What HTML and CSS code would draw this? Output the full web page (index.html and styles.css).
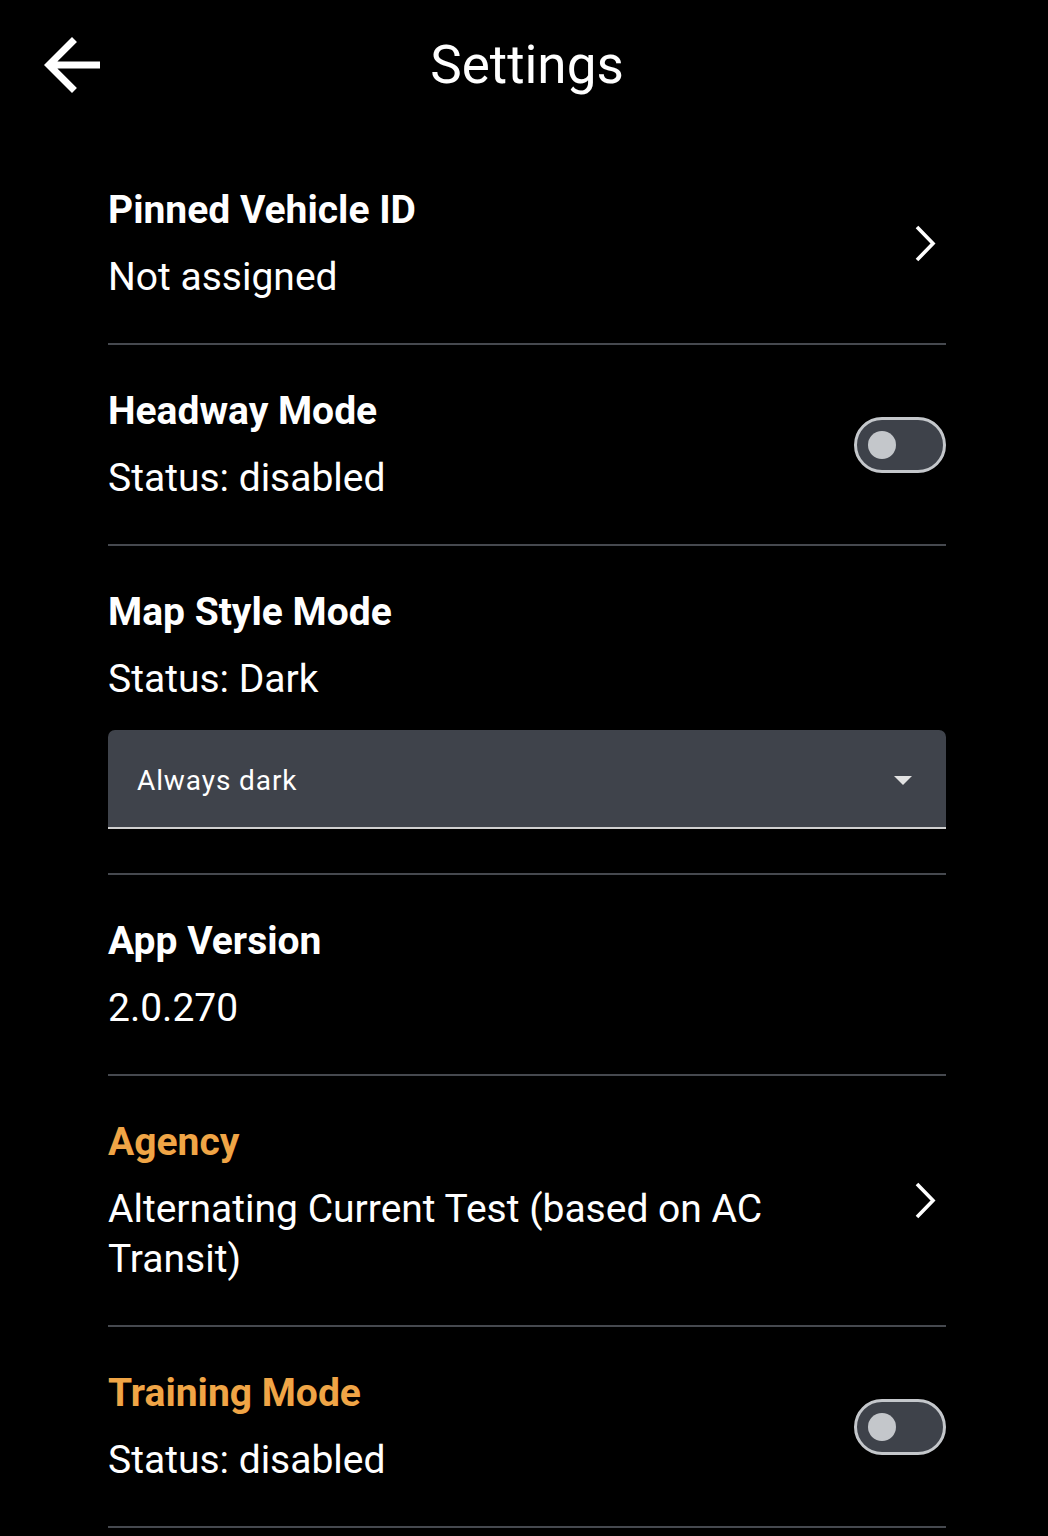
FILE: index.html
```html
<!DOCTYPE html>
<html lang="en">
<head>
<meta charset="utf-8">
<title>Settings</title>
<link rel="stylesheet" href="styles.css">
</head>
<body>
<header class="header">
  <button class="back" aria-label="Back">
    <svg width="84" height="84" viewBox="0 0 24 24"><path fill="#fff" d="M20 11H7.83l5.59-5.59L12 4l-8 8 8 8 1.41-1.41L7.83 13H20v-2z"/></svg>
  </button>
  <h1 class="title">Settings</h1>
  <span class="spacer"></span>
</header>
<main class="list">
  <section class="row">
    <div class="text">
      <div class="label">Pinned Vehicle ID</div>
      <div class="value">Not assigned</div>
    </div>
    <svg class="chev" width="24" height="40" viewBox="0 0 24 40"><polyline points="4,3 20,19.5 4,36" fill="none" stroke="#fff" stroke-width="3.6"/></svg>
  </section>
  <section class="row">
    <div class="text">
      <div class="label">Headway Mode</div>
      <div class="value">Status: disabled</div>
    </div>
    <div class="toggle"><span class="knob"></span></div>
  </section>
  <section class="row row-col">
    <div class="text">
      <div class="label">Map Style Mode</div>
      <div class="value">Status: Dark</div>
    </div>
    <div class="select">
      <span class="select-text">Always dark</span>
      <svg width="18" height="9" viewBox="0 0 18 9"><polygon points="0,0 18,0 9,9" fill="#e2e2e2"/></svg>
    </div>
  </section>
  <section class="row">
    <div class="text">
      <div class="label">App Version</div>
      <div class="value">2.0.270</div>
    </div>
  </section>
  <section class="row">
    <div class="text text-wide">
      <div class="label accent">Agency</div>
      <div class="value">Alternating Current Test (based on AC Transit)</div>
    </div>
    <svg class="chev" width="24" height="40" viewBox="0 0 24 40"><polyline points="4,3 20,19.5 4,36" fill="none" stroke="#fff" stroke-width="3.6"/></svg>
  </section>
  <section class="row">
    <div class="text">
      <div class="label accent">Training Mode</div>
      <div class="value">Status: disabled</div>
    </div>
    <div class="toggle"><span class="knob"></span></div>
  </section>
</main>
</body>
</html>
```
FILE: styles.css
```css
* { box-sizing: border-box; }
html, body {
  margin: 0;
  background: #000;
  color: #fff;
  font-family: Roboto, "Noto Sans", sans-serif;
}
.header {
  height: 130px;
  display: grid;
  grid-template-columns: 1fr auto 1fr;
  align-items: center;
}
.back {
  justify-self: start;
  margin-left: 30px;
  padding: 0;
  border: 0;
  background: none;
  width: 84px;
  height: 84px;
  display: flex;
}
.title {
  margin: 0;
  font-size: 53px;
  line-height: 58px;
  font-weight: 400;
  padding-left: 6px;
}
.list {
  margin: 0 102px 0 108px;
  padding-top: 14px;
}
.row {
  display: flex;
  align-items: center;
  justify-content: space-between;
  padding: 41px 0;
  border-bottom: 2px solid #46494f;
}
.row-col {
  flex-direction: column;
  align-items: stretch;
  padding-bottom: 44px;
}
.text-wide { max-width: 720px; }
.label {
  font-size: 39px;
  line-height: 50px;
  font-weight: 700;
}
.accent { color: #f0a546; }
.value {
  font-size: 39px;
  line-height: 50px;
  margin-top: 17px;
}
.chev { margin-right: 9px; flex: none; }
.toggle {
  flex: none;
  width: 92px;
  height: 56px;
  border: 3px solid #c4c7cb;
  border-radius: 28px;
  background: #3e424a;
  display: flex;
  align-items: center;
  padding-left: 11px;
}
.knob {
  width: 28px;
  height: 28px;
  border-radius: 50%;
  background: #c4c7cb;
}
.select {
  margin-top: 26px;
  height: 99px;
  background: #3f434b;
  border-radius: 7px 7px 0 0;
  border-bottom: 2px solid #d0d0d0;
  display: flex;
  align-items: center;
  justify-content: space-between;
  padding: 3px 34px 0 29px;
}
.select-text {
  font-size: 28px;
  letter-spacing: 0.9px;
}
```
